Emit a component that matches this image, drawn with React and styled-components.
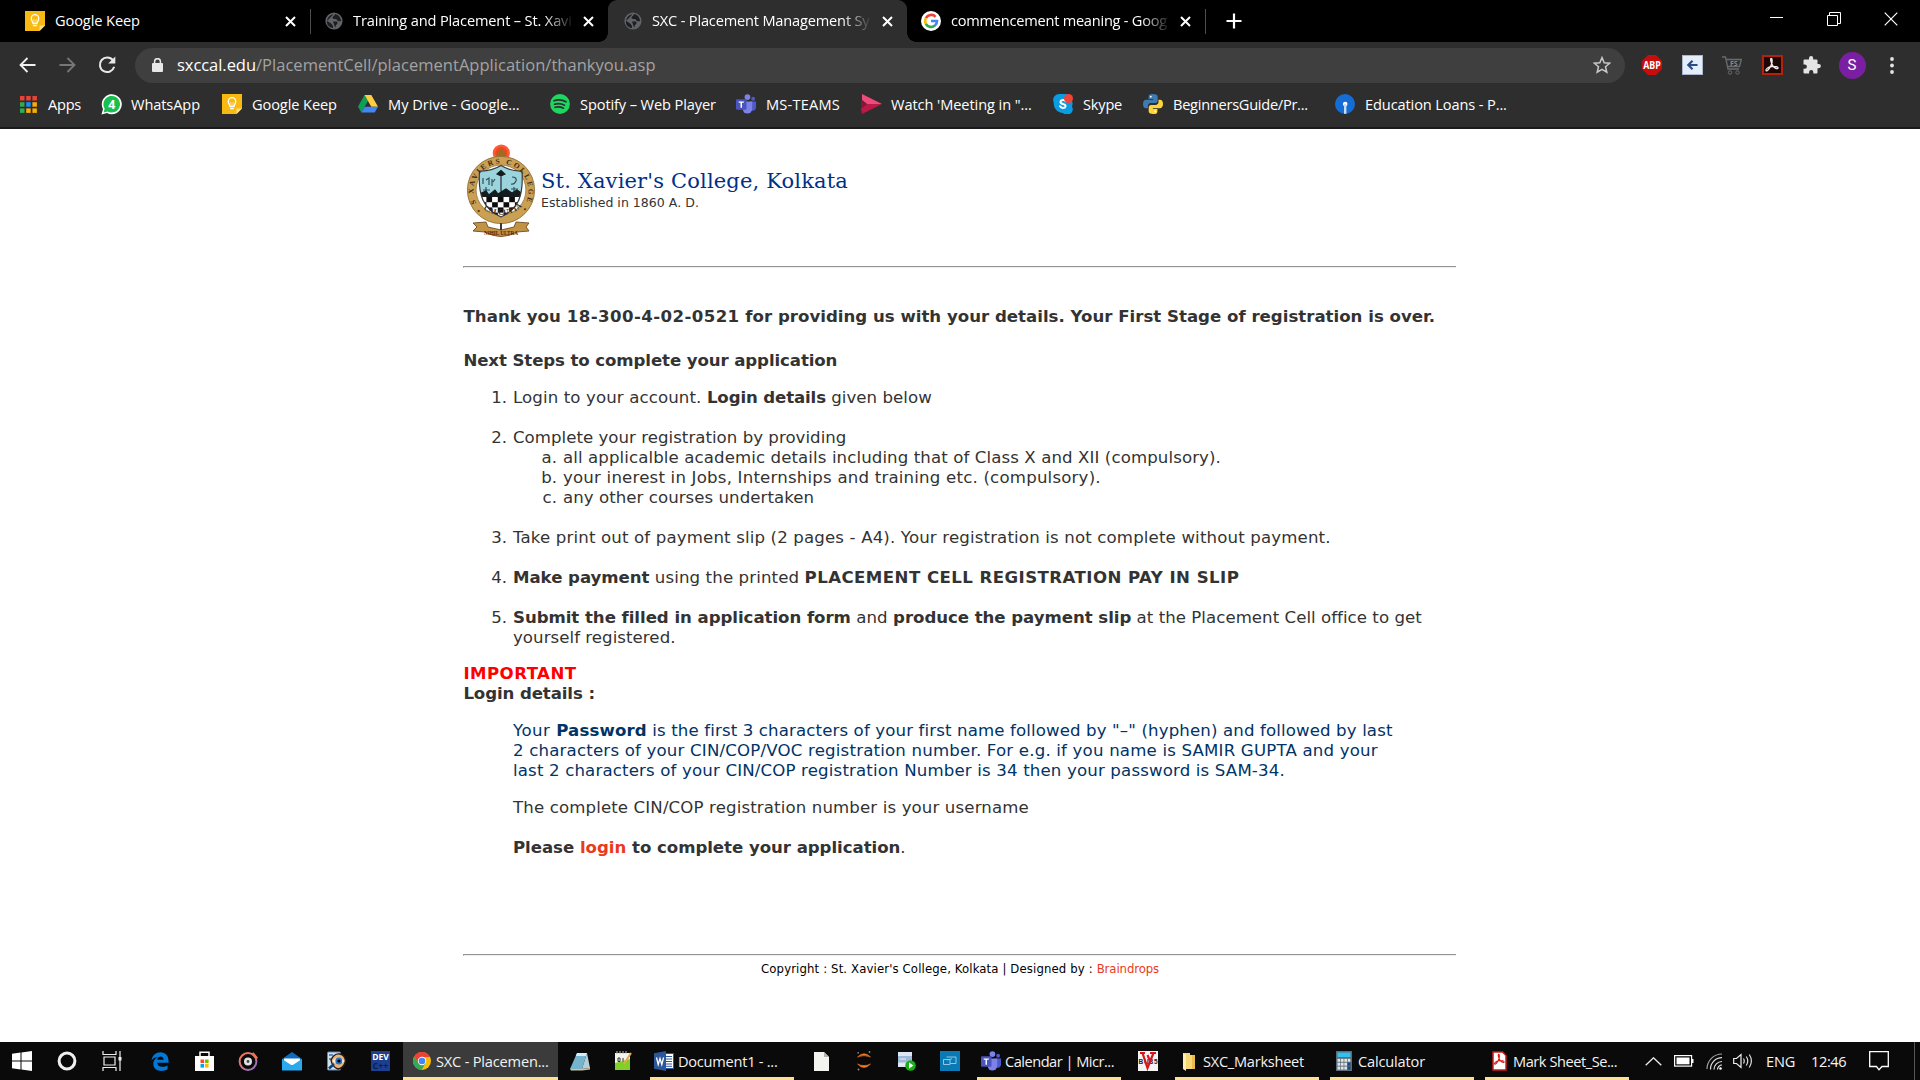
import React from "react";
import styled, { createGlobalStyle, css } from "styled-components";

const ui = `"Open Sans", "Noto Sans", sans-serif`;
const body = `"DejaVu Sans", Verdana, sans-serif`;

const GlobalStyle = createGlobalStyle`
  * { box-sizing: border-box; }
  html, body { margin: 0; background: #fff; overflow: hidden; }
`;

const Screen = styled.div`
  width: 1920px;
  height: 1080px;
  display: flex;
  flex-direction: column;
  background: #fff;
  overflow: hidden;
`;

/* ---------- browser tabs ---------- */

const TabStrip = styled.div`
  height: 42px;
  flex: none;
  display: flex;
  background: #000;
`;

const Tab = styled.div`
  width: ${(p) => p.$w}px;
  height: 42px;
  padding-left: ${(p) => p.$pad}px;
  padding-right: 13px;
  display: flex;
  align-items: center;
  flex: none;
  position: relative;
  ${(p) =>
    p.$active &&
    css`
      background: #2e2e2e;
      border-radius: 9px 9px 0 0;
      &::before,
      &::after {
        content: "";
        position: absolute;
        bottom: 0;
        width: 9px;
        height: 9px;
      }
      &::before {
        left: -9px;
        background: radial-gradient(circle at 0 0, transparent 8.5px, #2e2e2e 9px);
      }
      &::after {
        right: -9px;
        background: radial-gradient(circle at 100% 0, transparent 8.5px, #2e2e2e 9px);
      }
    `}
`;

const TabTitle = styled.span`
  width: ${(p) => p.$w}px;
  margin-left: 10px;
  padding-bottom: 2px;
  font: 14.6px/20px ${ui};
  letter-spacing: ${(p) => p.$ls}px;
  color: #fff;
  white-space: nowrap;
  flex: none;
  ${(p) => p.$fade && css`mask-image: linear-gradient(to right, #000 calc(100% - 30px), transparent 100%);`}
`;

const TabClose = styled.span`
  margin-left: auto;
  width: 14px;
  height: 20px;
  display: flex;
  align-items: center;
  justify-content: center;
`;

const Divider = styled.i`
  width: 1px;
  height: 25px;
  margin-top: 9px;
  background: #4d4d4d;
  flex: none;
`;

const NewTab = styled.span`
  width: 56px;
  display: flex;
  align-items: center;
  justify-content: center;
`;

const WindowControls = styled.div`
  margin-left: auto;
  margin-right: 1px;
  height: 37px;
  display: flex;
  align-items: center;
`;

const WindowButton = styled.span`
  width: 57px;
  display: flex;
  justify-content: center;
`;

/* ---------- toolbar ---------- */

const Toolbar = styled.div`
  height: 44px;
  flex: none;
  display: flex;
  align-items: center;
  padding: 2px 0 0 17px;
  background: #2e2e2e;
`;

const NavButton = styled.span`
  width: 20px;
  margin-right: ${(p) => p.$mr || 20}px;
  display: flex;
  justify-content: center;
`;

const AddressBar = styled.div`
  width: 1490px;
  height: 35px;
  margin-left: -3px;
  border-radius: 18px;
  background: #3f3f3f;
  display: flex;
  align-items: center;
  padding: 0 14px 0 17px;
`;

const Url = styled.span`
  margin-left: 14px;
  font: 16.5px/24px ${ui};
  letter-spacing: -0.05px;
  color: #fff;
  flex: 1;
`;

const UrlPath = styled.span`
  color: #a3a3a3;
  letter-spacing: 0.03px;
`;

const Extensions = styled.div`
  display: flex;
  align-items: center;
  margin-left: 7px;
`;

const Extension = styled.span`
  width: 40px;
  display: flex;
  justify-content: center;
`;

const Avatar = styled.span`
  width: 27px;
  height: 27px;
  border-radius: 50%;
  background: #7b1fa2;
  color: #fff;
  font: 15px/27px Roboto, sans-serif;
  text-align: center;
`;

const Bookmarks = styled.div`
  height: 43px;
  flex: none;
  display: flex;
  align-items: center;
  padding: 0 0 5px 18px;
  background: #2e2e2e;
  border-bottom: 2px solid #1c1a1b;
`;

const Bookmark = styled.div`
  width: ${(p) => p.$w}px;
  display: flex;
  align-items: center;
  flex: none;
  font: 14.6px/20px ${ui};
  letter-spacing: ${(p) => p.$ls}px;
  color: #fff;
  white-space: nowrap;
  gap: 9px;
`;

const IconBox = styled.span`
  width: ${(p) => p.$w || 22}px;
  height: 22px;
  display: flex;
  align-items: center;
  justify-content: center;
  flex: none;
`;

/* ---------- page ---------- */

const Page = styled.main`
  flex: 1;
  background: #fff;
  padding-left: 463px;
  font: 16.6px/20px ${body};
  color: #333;
`;

const Column = styled.div`
  width: 993px;
`;

const Masthead = styled.header`
  height: 137px;
  padding: 14px 0 0 1px;
  display: flex;
`;

const SchoolText = styled.div`
  padding: 24px 0 0 3px;
`;

const SchoolName = styled.div`
  font: 21px/28px "DejaVu Serif", serif;
  letter-spacing: 0.16px;
  color: #003087;
  white-space: nowrap;
`;

const Established = styled.div`
  font: 12.5px/16px ${body};
  letter-spacing: 0.04px;
  color: #333;
`;

const Rule = styled.div`
  height: 2px;
  border-top: 1px solid #949494;
  border-left: 1px solid #949494;
  border-bottom: 1px solid #eee;
`;

const Para = styled.div`
  margin-top: ${(p) => p.$mt || 0}px;
  padding-left: ${(p) => p.$indent || 0.4}px;
  color: ${(p) => p.$color || "inherit"};
  white-space: nowrap;
`;

const Steps = styled.ol`
  list-style: none;
  margin: 17px 0 0;
  padding: 0;
  display: flex;
  flex-direction: column;
  gap: 20px;
`;

const SubSteps = styled.ol`
  list-style: none;
  margin: 0;
  padding: 0;
`;

const Step = styled.li`
  display: flex;
  white-space: nowrap;
`;

const Marker = styled.span`
  width: 50px;
  padding-right: 6px;
  text-align: right;
  flex: none;
`;

const Run = styled.span`
  letter-spacing: ${(p) => p.$ls || 0}px;
`;

const Bold = styled.b`
  font-weight: bold;
  letter-spacing: ${(p) => p.$ls || 0}px;
  color: ${(p) => p.$color || "inherit"};
`;

const Spacer = styled.div`
  height: ${(p) => p.$h}px;
`;

const Footer = styled.footer`
  padding: 5px 0 0 298px;
  font: 13px/16px "DejaVu Sans Condensed", "DejaVu Sans", Tahoma, sans-serif;
  font-stretch: condensed;
  letter-spacing: 0.13px;
  color: #000;
  white-space: nowrap;
`;

const FooterLink = styled.a`
  color: #ea3a20;
  letter-spacing: -0.08px;
`;

/* ---------- taskbar ---------- */

const Taskbar = styled.div`
  height: 38px;
  flex: none;
  display: flex;
  background: #0a0a0a;
`;

const TaskIcon = styled.span`
  width: ${(p) => p.$w}px;
  display: flex;
  align-items: center;
  justify-content: center;
  flex: none;
`;

const TaskWindow = styled.div`
  width: ${(p) => p.$w || 144}px;
  margin-left: ${(p) => p.$ml || 0}px;
  padding-left: ${(p) => (p.$active ? 9 : 4)}px;
  border-bottom: 3px solid #ffe092;
  background: ${(p) => (p.$active ? "#3b3b3b" : "transparent")};
  display: flex;
  align-items: center;
  gap: 4px;
  flex: none;
  padding-top: 3px;
  font: 14.6px/20px ${ui};
  letter-spacing: ${(p) => p.$ls}px;
  color: #f2f2f2;
  white-space: nowrap;
`;

const Tray = styled.div`
  margin-left: 16px;
  display: flex;
  align-items: center;
  font: 14.6px/20px ${ui};
  color: #f5f5f5;
`;

const TrayItem = styled.span`
  width: ${(p) => p.$w}px;
  margin-right: ${(p) => p.$mr || 0}px;
  letter-spacing: ${(p) => p.$ls || 0}px;
  display: flex;
  flex: none;
  white-space: nowrap;
`;

const ShowDesktop = styled.span`
  margin-left: auto;
  width: 6px;
  border-left: 1px solid #555;
`;

/* ---------- icons ---------- */

const Svg = ({ w = 20, h, vb, children, ...rest }) => (
  <svg width={w} height={h || w} viewBox={vb || `0 0 ${w} ${h || w}`} fill="none" {...rest}>
    {children}
  </svg>
);

const KeepIcon = () => (
  <Svg>
    <path d="M0 0H20V14.500L14.500 20H0Z" fill="#f9b913" />
    <path d="M14.500 20V14.500H20Z" fill="#fde07a" />
    <path d="M8 12.500C8 10.800 6.300 10 6.300 7.400a3.700 3.700 0 0 1 7.400 0C13.700 10 12 10.800 12 12.500ZM8.200 14.700H11.800" stroke="#fff" strokeWidth="1.300" />
    <path d="M9 12V9L8.500 8M11 12V9L11.500 8" stroke="#fff" strokeWidth=".6" />
  </Svg>
);

const GlobeIcon = () => (
  <Svg w={18}>
    <circle cx="9" cy="9" r="8.600" fill="#5f6368" />
    <path d="M8.500 2.200C5 2.800 2.300 5.400 2.200 9l3.600 2.200c1.500.8 1 1.900 2.200 2.300v2.600C4 15.600 1.500 12.500 2 9M10 2c0 1.800-2 2-2.400 3.300-.4 1.400 1.200 1.900 3 1.800 1.600 0 1.400 2 3 2.100 1.300.1 2.500-.3 2.500-.3C15.700 5.300 13.500 2.700 10 2ZM8 9.500h4c1 1.500.5 2.500-1 3.500l-.8 2.800" fill="#1d1e20" />
  </Svg>
);

const CloseIcon = () => (
  <Svg w={11}>
    <path d="M1 1L10 10M10 1L1 10" stroke="#fff" strokeWidth="2" />
  </Svg>
);

const GoogleIcon = () => (
  <Svg>
    <circle cx="10" cy="10" r="10" fill="#fff" />
    <path d="M14.600 5.800A6 6 0 0 0 4.900 7.200" stroke="#ea4335" strokeWidth="2.600" />
    <path d="M4.900 7.100a6 6 0 0 0 0 5.800" stroke="#fbbc05" strokeWidth="2.600" />
    <path d="M4.800 12.800a6 6 0 0 0 9.200 1.700" stroke="#34a853" strokeWidth="2.600" />
    <path d="M10 10H16A6 6 0 0 1 13.900 14.600" stroke="#4285f4" strokeWidth="2.600" />
  </Svg>
);

const AppsIcon = () => (
  <Svg w={17}>
    {["#ea4335", "#ea4335", "#ea4335", "#34a853", "#1a8cff", "#fbab05", "#34a853", "#fbab05", "#fbab05"].map((c, i) => (
      <rect key={i} x={(i % 3) * 6.2} y={Math.floor(i / 3) * 6.2} width="4.500" height="4.500" fill={c} />
    ))}
  </Svg>
);

const WhatsAppIcon = () => (
  <Svg w={21}>
    <path d="M.5 20.500L2 15A10 10 0 1 1 6 19Z" fill="#fff" />
    <path d="M2.500 18.500L3.700 14.700A8.300 8.300 0 1 1 6.500 17.400Z" fill="#16bf4e" />
    <text x="10.800" y="15" textAnchor="middle" fontFamily="Roboto" fontWeight="bold" fontSize="13" fill="#fff">4</text>
  </Svg>
);

const DriveIcon = () => (
  <Svg w={20} h={18}>
    <path d="M6.500 0L0 11.500L3.300 17.500L10 6Z" fill="#0f9d58" />
    <path d="M6.500 0H13.300L20 11.700H13.300Z" fill="#ffcd40" />
    <path d="M6.700 11.700H20L16.700 17.500H3.300Z" fill="#4285f4" />
  </Svg>
);

const SpotifyIcon = () => (
  <Svg>
    <circle cx="10" cy="10" r="9.900" fill="#1ed760" />
    <path d="M4 6.800c4-1.300 8.500-.9 12 1M4.500 10.200c3.500-1 7-.6 10 1M5 13.300c3-.8 6-.5 8.500.9" stroke="#2e2e2e" strokeWidth="1.700" strokeLinecap="round" />
  </Svg>
);

const TeamsIcon = () => (
  <Svg w={20} h={22} vb="0 0 21 21">
    <circle cx="18" cy="5" r="2" fill="#5059c9" />
    <circle cx="12" cy="3.200" r="3" fill="#7b83eb" />
    <path d="M15 8h6v6a3.500 3.500 0 0 1-5 3.300Z" fill="#5059c9" />
    <path d="M7 8h10v7.500a5 5 0 0 1-10 0Z" fill="#7b83eb" />
    <rect x="0" y="5.500" width="11" height="11" rx="1" fill="#4b53bc" />
    <path d="M2.800 8.500H8.200M5.500 8.500V14.500" stroke="#fff" strokeWidth="1.500" />
  </Svg>
);

const StreamIcon = () => (
  <Svg w={21} h={20}>
    <path d="M1 0L21 10H6L1 6Z" fill="#ef4a7b" />
    <path d="M0 6.500L6 10L0 14Z" fill="#8a1538" />
    <path d="M0 14.500L6 10H21L1 20Z" fill="#bc1948" />
  </Svg>
);

const SkypeIcon = () => (
  <Svg w={21} h={20}>
    <path d="M6 0a6 6 0 0 0-5.300 8.500A9.500 9.500 0 0 0 10 19a5.600 5.600 0 0 0 9-6.500A10 10 0 0 0 6 0Z" fill="#0a9be3" />
    <path d="M12.800 7.200C12 6 10.600 5.900 9.500 6 7.500 6.200 6.500 8.800 9 9.700c1.700.6 4 .7 3.500 2.800-.6 2-4.500 2-5.500-.3" stroke="#fff" strokeWidth="2" strokeLinecap="round" />
    <circle cx="15.500" cy="4.500" r="4.500" fill="#f04438" />
  </Svg>
);

const PythonIcon = () => (
  <Svg w={20}>
    <path d="M9.800 0C6.500 0 5.600 1 5.600 2.600V5h4.600v.8H3.200C1.200 5.800 0 7.300 0 10s1 4.300 3 4.300h1.900v-2.400c0-1.600 1.300-2.900 3-2.900h4.400c1.400 0 2.400-1 2.400-2.400v-4C14.700 1 13 0 9.800 0Z" fill="#3d7bb0" />
    <path d="M10.200 20c3.300 0 4.200-1 4.200-2.600V15H9.800v-.8h7c2 0 3.200-1.500 3.200-4.200s-1-4.300-3-4.300h-1.500v2.300c0 1.600-1.300 2.900-3 2.900H8.100c-1.400 0-2.400 1-2.400 2.400v4C5.700 19 7 20 10.200 20Z" fill="#ffd43b" />
    <circle cx="7.800" cy="2.700" r=".9" fill="#fff" />
    <circle cx="12.300" cy="17.300" r=".9" fill="#fff" />
  </Svg>
);

const LoanIcon = () => (
  <Svg>
    <circle cx="10" cy="10" r="10" fill="#156cd4" />
    <circle cx="10.200" cy="10" r="2.300" fill="#fff" />
    <path d="M10.200 10V19.800" stroke="#c6dcf7" strokeWidth="2.400" />
  </Svg>
);

const BackIcon = ({ color = "#f0f0f0", flip }) => (
  <Svg w={17} h={16} transform={flip ? "scale(-1,1)" : undefined}>
    <path d="M16.500 8H1.500M8.500 1L1.500 8L8.500 15" stroke={color} strokeWidth="1.800" />
  </Svg>
);

const ReloadIcon = () => (
  <Svg w={18}>
    <path d="M15 4.300A7.300 7.300 0 1 0 16.200 10.800" stroke="#e8e8e8" strokeWidth="2" />
    <path d="M17.300 0.500V7.600H10.200Z" fill="#e8e8e8" />
  </Svg>
);

const LockIcon = () => (
  <Svg w={11} h={14}>
    <rect x="0" y="5" width="11" height="9" rx="1" fill="#e8e8e8" />
    <path d="M2.600 6V3.600a2.900 2.900 0 0 1 5.800 0V6" stroke="#e8e8e8" strokeWidth="1.500" />
  </Svg>
);

const StarIcon = () => (
  <Svg w={18}>
    <path d="M9 1.600L11.200 6.700L16.700 7.200L12.500 10.800L13.800 16.200L9 13.300L4.200 16.200L5.500 10.800L1.300 7.200L6.800 6.700Z" stroke="#c9c9c9" strokeWidth="1.500" />
  </Svg>
);

const AbpIcon = () => (
  <Svg w={20}>
    <path d="M6 0H14L20 6V14L14 20H6L0 14V6Z" fill="#c70d0d" />
    <text x="10" y="13.800" textLength="17.500" lengthAdjust="spacingAndGlyphs" textAnchor="middle" fontFamily="Open Sans" fontWeight="bold" fontSize="10.500" fill="#fff">ABP</text>
  </Svg>
);

const TranslatorIcon = () => (
  <Svg w={21} h={20}>
    <rect x=".5" y=".5" width="20" height="19" fill="#e4eefb" stroke="#a9b8cc" />
    <path d="M15.500 10H6.500M10.500 5.800L6.300 10L10.500 14.200" stroke="#2b4c86" strokeWidth="2.200" />
  </Svg>
);

const CartIcon = () => (
  <Svg w={20} h={19}>
    <path d="M0 1H3.500L6 13H17M4.200 3.500H19.300L17.500 10.500H5.800" stroke="#6b6b6b" strokeWidth="1.300" />
    <circle cx="8" cy="16.500" r="1.700" stroke="#6b6b6b" />
    <circle cx="15.500" cy="16.500" r="1.700" stroke="#6b6b6b" />
    <text x="11.800" y="9.700" textAnchor="middle" fontFamily="Open Sans" fontWeight="bold" fontSize="7" fill="#8a8a8a">FS</text>
  </Svg>
);

const Acrobat = ({ stroke }) => (
  <path d="M9.200 3.500C8 3.500 9 7.500 10.500 10.200C12 12.800 14.800 14.500 16 13.200C16.700 11.800 12.500 11 9.500 11.500C6 12.200 3.500 14 4 15.500C5.200 17 8.500 12.500 9.600 9C10.400 6.500 10.400 3.500 9.200 3.500Z" stroke={stroke} strokeWidth="1.300" />
);

const PdfExtIcon = () => (
  <Svg w={21} h={20}>
    <rect x="1" y="1" width="19" height="18" fill="#1c0504" stroke="#b3220f" strokeWidth="2" />
    <Acrobat stroke="#f2e9e8" />
  </Svg>
);

const PuzzleIcon = () => (
  <Svg w={18}>
    <path d="M6 3.500V2.200a2.100 2.100 0 0 1 4.200 0V3.500H13.500a1 1 0 0 1 1 1V8H15.800a2.100 2.100 0 0 1 0 4.200H14.500V16.500a1 1 0 0 1-1 1H10.300V16a2.100 2.100 0 0 0-4.200 0V17.500H1.500a1 1 0 0 1-1-1V12.800H1.800a2.100 2.100 0 0 0 0-4.200H.5V4.500a1 1 0 0 1 1-1Z" fill="#e4e4e4" />
  </Svg>
);

const DotsIcon = () => (
  <Svg w={4} h={17}>
    {[2, 8.5, 15].map((y) => <circle key={y} cx="2" cy={y} r="1.900" fill="#e4e4e4" />)}
  </Svg>
);

const shieldPath = "M15.500 28Q27 28.500 37 22.500Q47 28.500 58 28C59.500 52 55 66 37 74C19 66 14 52 15.500 28Z";

const Crest = () => (
  <Svg w={74} h={98}>
    <defs>
      <path id="ringTop" d="M17.200 67.200A27.500 27.500 0 1 1 56.800 67.200" />
      <path id="ringBottom" d="M9.500 55A31 31 0 0 0 64.500 55" />
      <clipPath id="shield">
        <path d={shieldPath} />
      </clipPath>
    </defs>
    <circle cx="37.300" cy="10" r="8.600" fill="#ff5a36" />
    <circle cx="37.300" cy="10" r="6" fill="#f2461f" />
    <path d="M37.300 4.500L40 9L42.500 10.500L39.500 15H35L32 10.500L34.500 9Z" fill="#a06a24" />
    <path d="M37 70V91" stroke="#222" strokeWidth="1.400" />
    <circle cx="37" cy="47" r="29.300" stroke="#caa055" strokeWidth="8.800" />
    <circle cx="37" cy="47" r="33.600" stroke="#8d6a34" strokeWidth=".8" />
    <circle cx="37" cy="47" r="24.900" stroke="#8d6a34" strokeWidth=".7" />
    <g clipPath="url(#shield)">
      <rect x="12" y="20" width="50" height="56" fill="#9cd4de" />
      <path d="M19 35V41M22 37L25 35V42M28 36V43M31 36L29 39M48 34Q53 34 52 38Q50 42 47 41M19 47H26M47 46H54M22 44V49M50 44V49" stroke="#2f5058" strokeWidth="1.200" />
      <path d="M37 32V52M33 31L37 27.500L41 31L37 33ZM15 51L22 48L25 52L31 47L34 51L42 46L48 50L53 47L60 52V56H14Z" fill="#151c1e" stroke="#151c1e" strokeWidth="1.100" />
      <rect x="12" y="54" width="50" height="22" fill="#fff" />
      {[0, 1, 2, 3].map((r) =>
        [0, 1, 2, 3, 4, 5, 6, 7, 8].map((c) =>
          (r + c) % 2 ? null : <rect key={`${r}-${c}`} x={11 + c * 5.7} y={54 + r * 5.2} width="5.700" height="5.200" fill="#0d0d0d" />
        )
      )}
    </g>
    <path d={shieldPath} stroke="#3a3a3a" strokeWidth="1.200" />
    <text fontFamily="Liberation Serif" fontWeight="bold" fontSize="7.400" fill="#3b2710">
      <textPath href="#ringTop" textLength="126">• S XAVIERS COLLEGE •</textPath>
    </text>
    <text fontFamily="Liberation Serif" fontWeight="bold" fontSize="7.400" fill="#3b2710">
      <textPath href="#ringBottom" startOffset="15" textLength="42">CALCUTTA</textPath>
    </text>
    <path d="M9 80L22 79L24 84L37 87L50 84L52 79L65 80L62 84L65 88L53 89Q37 98 21 89L9 88L13 84Z" fill="#c39345" stroke="#6d4c1d" strokeWidth=".9" />
    <path d="M37 80V87" stroke="#222" strokeWidth="1.300" />
    <text x="37" y="92" textAnchor="middle" fontFamily="Liberation Serif" fontWeight="bold" fontSize="5.200" fill="#3b2710">NIHIL ULTRA</text>
  </Svg>
);

const StartIcon = () => (
  <Svg w={20}>
    <path d="M0 2.800L8.500 1.600V9.500H0ZM9.500 1.400L20 0V9.500H9.500ZM0 10.500H8.500V18.400L0 17.200ZM9.500 10.500H20V20L9.500 18.600Z" fill="#fff" />
  </Svg>
);
const CortanaIcon = () => <Svg w={20}><circle cx="10" cy="10" r="7.900" stroke="#f0f0f0" strokeWidth="3" /></Svg>;
const TaskViewIcon = () => (
  <Svg w={20}>
    <path d="M1 0V3.500H14V0M1 20V16.500H14V20M2 6H13V14H2ZM18 0V20" stroke="#eee" strokeWidth="1.200" />
    <rect x="16.500" y="6" width="3" height="3.500" fill="#eee" />
  </Svg>
);
const EdgeIcon = () => (
  <Svg w={18} h={19}>
    <path d="M.5 8.500C1.500 3 5 .3 9.500.3c5.500 0 8.500 4 8 10.500H6.200c.3 4.500 6.500 5 10.300 2.700v4C10.500 20.500 2.300 18.800 2.300 12c0-3.500 2-5.700 4.500-7C3.800 5.300 1.700 6.500.5 8.500ZM6.200 7.700h6.400c0-4.500-6-4.200-6.400 0Z" fill="#0078d7" />
  </Svg>
);
const StoreIcon = () => (
  <Svg w={19} h={20}>
    <path d="M5 5V1.200H14V5" stroke="#fff" strokeWidth="1.500" />
    <path d="M0 5H19V20H0Z" fill="#fff" />
    <rect x="5.500" y="8.500" width="3.600" height="3.600" fill="#f25022" />
    <rect x="10" y="8.500" width="3.600" height="3.600" fill="#7fba00" />
    <rect x="5.500" y="13" width="3.600" height="3.600" fill="#00a4ef" />
    <rect x="10" y="13" width="3.600" height="3.600" fill="#ffb900" />
  </Svg>
);
const GrooveIcon = () => (
  <Svg w={20}>
    <defs><linearGradient id="gr" x1="0" y1="0" x2="1" y2="1"><stop stopColor="#ff7a4a" /><stop offset="1" stopColor="#8a6fd0" /></linearGradient></defs>
    <circle cx="10" cy="10.500" r="8.400" stroke="url(#gr)" strokeWidth="2" />
    <circle cx="10" cy="10.500" r="4" fill="#e2e2e2" /><circle cx="10" cy="10.500" r="1.400" fill="#444" />
    <path d="M14.500 2L19 7.500" stroke="#f0754f" strokeWidth="2.600" />
  </Svg>
);
const MailIcon = () => (
  <Svg w={20} h={19}>
    <path d="M0 7L10 0L20 7V18H0Z" fill="#0f6cbd" /><path d="M2 6.500H18V13H2Z" fill="#fff" />
    <path d="M0 7L10 13.500L20 7V18.500H0Z" fill="#2aa9ee" />
  </Svg>
);
const EyeIcon = () => (
  <Svg w={19} h={20}>
    <rect x=".5" y="1" width="13" height="18" rx="1" fill="#cfe0f0" stroke="#5c87b5" />
    <path d="M2 4H6M2 8H4" stroke="#3b6ea5" strokeWidth="1.500" />
    <path d="M4 9Q7 2 13 3Q18 4 18.500 10Q17 17 11 18Q5 16 4 9Z" fill="#e9b579" stroke="#2a1a10" strokeWidth="1.400" />
    <path d="M5.500 10Q11 3.500 17.500 10Q11.500 16.500 5.500 10Z" fill="#f7f7f7" />
    <circle cx="11.800" cy="10" r="3.500" fill="#2a6fc4" /><circle cx="12" cy="10" r="1.600" fill="#000" />
    <path d="M2 17.500L7 13" stroke="#123e7a" strokeWidth="2.500" />
  </Svg>
);
const DevIcon = () => (
  <Svg w={19} h={20}>
    <rect width="19" height="20" fill="#1c3f8f" />
    <text x="9.500" y="8.800" textAnchor="middle" fontFamily="Open Sans" fontWeight="bold" fontSize="8.500" fill="#fff">DEV</text>
    <text x="9.500" y="18" textAnchor="middle" fontFamily="Open Sans" fontWeight="bold" fontSize="9" fill="#0c1f52">C++</text>
  </Svg>
);
const ChromeIcon = () => (
  <Svg w={18}>
    <circle cx="9" cy="9" r="9" fill="#fbbc05" />
    <path d="M9 9L12.600 11.100L8.600 18A9 9 0 0 1 1.200 4.500L5.400 11Z" fill="#34a853" />
    <path d="M1.200 4.500A9 9 0 0 1 17 5H9V9L5.400 11.100Z" fill="#ea4335" />
    <circle cx="9" cy="9" r="4.200" fill="#fff" /><circle cx="9" cy="9" r="3.300" fill="#4285f4" />
  </Svg>
);
const NotepadIcon = () => (
  <Svg w={20} h={19}>
    <path d="M7 1H17L12 17H0Z" fill="#74b4cc" /><path d="M7 1H17L16 4H5.800Z" fill="#d5edf5" />
    <path d="M17 1L20 16L12 17Z" fill="#b5cdd6" /><path d="M0 17H12L20 16V17.500L12 18.500H1Z" fill="#d0c49a" />
  </Svg>
);
const NppIcon = () => (
  <Svg w={18} h={20}>
    <path d="M1 2H16V19H1Z" fill="#f4f6ea" /><path d="M1 12L16 8V19H1Z" fill="#83cf29" />
    <path d="M3 0V3M6 0V3M9 0V3M12 0V3" stroke="#bbb" /><path d="M4 7V10.500H6V7H4M9 7V10.500" stroke="#333" strokeWidth="1" />
    <path d="M17 2L10 13" stroke="#e3a94b" strokeWidth="2" />
  </Svg>
);
const WordIcon = () => (
  <Svg w={20}>
    <rect x="9" y="2.500" width="10.500" height="15" fill="#fff" stroke="#2b579a" />
    <path d="M12 5.500H18M12 8H18M12 10.500H18M12 13H18M12 15.300H18" stroke="#2b579a" />
    <path d="M0 2.200L12 0V20L0 17.800Z" fill="#2b579a" />
    <path d="M2.500 6.500L4.200 13.500L6 7.500L7.800 13.500L9.600 6.500" stroke="#fff" strokeWidth="1.300" />
  </Svg>
);
const FileIcon = () => (
  <Svg w={15} h={19}><path d="M0 0H10L15 5V19H0Z" fill="#f3f3ef" /><path d="M10 0V5H15Z" fill="#b5b5b0" /></Svg>
);
const JupyterIcon = () => (
  <Svg w={14} h={20}>
    <path d="M.5 6Q7-.5 13.500 6Q7 3.200 .5 6ZM.5 13Q7 20 13.500 13Q7 16.200 .5 13Z" fill="#f37726" stroke="#f37726" strokeWidth=".6" />
    <circle cx="1.200" cy="1.800" r=".9" fill="#888" /><circle cx="12.500" cy="1" r=".9" fill="#888" /><circle cx="1.500" cy="18.500" r="1" fill="#888" />
  </Svg>
);
const ServerIcon = () => (
  <Svg w={18} h={19}>
    <path d="M0 0H14V15H0Z" fill="#9fb9da" /><path d="M0 0H14V4H0ZM0 10.500H14V15H0Z" fill="#dde7f3" />
    <path d="M1.500 7H8M1.500 12.500H8" stroke="#eee" />
    <circle cx="12.500" cy="13.500" r="5.300" fill="#1cae1c" /><path d="M11 10.500L15.500 13.500L11 16.500Z" fill="#fff" />
  </Svg>
);
const RemoteIcon = () => (
  <Svg w={20}>
    <rect width="20" height="20" fill="#0a7ab5" />
    <path d="M6.500 6H16V12.500H10M3.500 8.500H10V13.500H3.500ZM7 9L12 7.800" stroke="#8fc6e2" />
  </Svg>
);
const VbIcon = () => (
  <Svg w={20}>
    <rect width="20" height="20" fill="#f4f4f4" />
    <text x="10" y="12.500" textAnchor="middle" textLength="19" fontFamily="Liberation Sans" fontWeight="bold" fontSize="6.500" fill="#222">BU85</text>
    <path d="M2 2H7M12 2H18M4.500 2L9.500 17L15.500 2M9.500 4L12 10" stroke="#d8141c" strokeWidth="2.200" />
  </Svg>
);
const FolderIcon = () => (
  <Svg w={12} h={19}><path d="M0 1H7V3H12V17H0Z" fill="#f8d775" /><path d="M0 1L3 3V19L0 17Z" fill="#ffeeb0" /><path d="M9 3H12V17H9Z" fill="#e8bd4c" /></Svg>
);
const CalcIcon = () => (
  <Svg w={16} h={20}>
    <rect width="16" height="20" fill="#5f6b75" /><rect x="1.500" y="1.500" width="13" height="4.500" fill="#31c0f2" />
    {[0, 1, 2, 3].map((c) => [0, 1, 2].map((r) => <rect key={`${c}${r}`} x={1.5 + c * 3.4} y={7.8 + r * 3.9} width="2.700" height="3" fill={c === 3 && r ? "#0d4f94" : "#dfe4e8"} />))}
  </Svg>
);
const PdfFileIcon = () => (
  <Svg w={15} h={20}>
    <path d="M1 1H10.500L14 4.500V19H1Z" fill="#fff" stroke="#c81e1e" strokeWidth="1.500" />
    <g transform="translate(-.7 .5) scale(.8)"><Acrobat stroke="#d11" /></g>
  </Svg>
);

const ChevronIcon = () => <Svg w={17} h={9}><path d="M.7 8.300L8.500 .8L16.300 8.300" stroke="#eee" strokeWidth="1.300" /></Svg>;
const BatteryIcon = () => (
  <Svg w={20} h={12}><rect x=".6" y=".6" width="17" height="10.500" stroke="#fff" strokeWidth="1.200" /><rect x="2.500" y="2.500" width="13" height="6.800" fill="#fff" /><rect x="18" y="4" width="1.500" height="4" fill="#fff" /></Svg>
);
const WifiIcon = () => (
  <Svg w={17} h={17}>
    <path d="M1 16A15 15 0 0 1 16 1" stroke="#a0a0a0" strokeWidth="1.200" />
    <path d="M4.500 16.500A11.500 11.500 0 0 1 16 4.700M8 16.500A8 8 0 0 1 16 8.500M11.500 16.500A4.500 4.500 0 0 1 16 12" stroke="#e4e4e4" strokeWidth="1.200" />
    <circle cx="14.500" cy="15.500" r="1.300" fill="#fff" />
  </Svg>
);
const SpeakerIcon = () => (
  <Svg w={21} h={18}>
    <path d="M.7 6.500H3.500L8 2.500V15.500L3.500 11.500H.7Z" stroke="#eee" strokeWidth="1.200" />
    <path d="M10.500 6.500Q12 9 10.500 11.500M13.300 4.500Q16.200 9 13.300 13.500M16.300 2.500Q20.500 9 16.300 15.500" stroke="#ddd" strokeWidth="1.200" />
  </Svg>
);
const ActionIcon = () => <Svg w={20}><path d="M.7 .7H19.300V15.500H13L10 18.800L7.500 15.500H.7Z" stroke="#fff" strokeWidth="1.300" /></Svg>;

/* ---------- data ---------- */

const bookmarks = [
  { icon: <AppsIcon />, label: "Apps", w: 82, ls: -0.25, iw: 21 },
  { icon: <WhatsAppIcon />, label: "WhatsApp", w: 121, ls: -0.1 },
  { icon: <KeepIcon />, label: "Google Keep", w: 136, ls: -0.1 },
  { icon: <DriveIcon />, label: "My Drive - Google...", w: 192, ls: 0 },
  { icon: <SpotifyIcon />, label: "Spotify – Web Player", w: 186, ls: -0.11 },
  { icon: <TeamsIcon />, label: "MS-TEAMS", w: 125, ls: 0.2 },
  { icon: <StreamIcon />, label: "Watch 'Meeting in \"...", w: 192, ls: -0.08 },
  { icon: <SkypeIcon />, label: "Skype", w: 90, ls: -0.2 },
  { icon: <PythonIcon />, label: "BeginnersGuide/Pr...", w: 192, ls: -0.27 },
  { icon: <LoanIcon />, label: "Education Loans - P...", w: 180, ls: -0.12 },
];

export default function App() {
  return (
    <Screen>
      <GlobalStyle />
      <TabStrip>
        <Tab $w={310} $pad={25}>
          <KeepIcon />
          <TabTitle $w={220} $ls={-0.1}>Google Keep</TabTitle>
          <TabClose><CloseIcon /></TabClose>
        </Tab>
        <Divider />
        <Tab $w={297} $pad={14}>
          <GlobeIcon />
          <TabTitle $w={221} $ls={-0.15} $fade>Training and Placement – St. Xavi</TabTitle>
          <TabClose><CloseIcon /></TabClose>
        </Tab>
        <Tab $w={299} $pad={16} $active>
          <GlobeIcon />
          <TabTitle $w={220} $ls={-0.18} $fade>SXC - Placement Management Sy</TabTitle>
          <TabClose><CloseIcon /></TabClose>
        </Tab>
        <Tab $w={298} $pad={14}>
          <GoogleIcon />
          <TabTitle $w={220} $ls={-0.24} $fade>commencement meaning - Goog</TabTitle>
          <TabClose><CloseIcon /></TabClose>
        </Tab>
        <Divider />
        <NewTab>
          <Svg w={16}><path d="M8 .5V15.500M.5 8H15.500" stroke="#fff" strokeWidth="2.200" /></Svg>
        </NewTab>
        <WindowControls>
          <WindowButton><Svg w={13} h={13}><path d="M0 5.500H13" stroke="#fff" /></Svg></WindowButton>
          <WindowButton><Svg w={14} h={14}><path d="M.5 3.500H10.500V13.500H.5ZM2.500 3.500V.5H13.500V11.500H10.500" stroke="#fff" /></Svg></WindowButton>
          <WindowButton><Svg w={14} h={14}><path d="M.7 .7L13.300 13.300M13.300 .7L.7 13.300" stroke="#fff" strokeWidth="1.200" /></Svg></WindowButton>
        </WindowControls>
      </TabStrip>

      <Toolbar>
        <NavButton><BackIcon /></NavButton>
        <NavButton><BackIcon color="#777" flip /></NavButton>
        <NavButton $mr={21}><ReloadIcon /></NavButton>
        <AddressBar>
          <LockIcon />
          <Url>sxccal.edu<UrlPath>/PlacementCell/placementApplication/thankyou.asp</UrlPath></Url>
          <StarIcon />
        </AddressBar>
        <Extensions>
          <Extension><AbpIcon /></Extension>
          <Extension><TranslatorIcon /></Extension>
          <Extension><CartIcon /></Extension>
          <Extension><PdfExtIcon /></Extension>
          <Extension><PuzzleIcon /></Extension>
          <Extension><Avatar>S</Avatar></Extension>
          <Extension><DotsIcon /></Extension>
        </Extensions>
      </Toolbar>

      <Bookmarks>
        {bookmarks.map((b) => (
          <Bookmark key={b.label} $w={b.w} $ls={b.ls}>
            <IconBox $w={b.iw}>{b.icon}</IconBox>
            {b.label}
          </Bookmark>
        ))}
      </Bookmarks>

      <Page>
        <Column>
          <Masthead>
            <Crest />
            <SchoolText>
              <SchoolName>St. Xavier's College, Kolkata</SchoolName>
              <Established>Established in 1860 A. D.</Established>
            </SchoolText>
          </Masthead>
          <Rule />
          <Para $mt={39}>
            <Bold $ls={0.06}>Thank you </Bold>
            <Bold $ls={0.42}>18-300-4-02-0521</Bold>
            <Bold $ls={0}> for providing us with your details. Your First Stage of registration is over.</Bold>
          </Para>
          <Para $mt={24}><Bold $ls={-0.1}>Next Steps to complete your application</Bold></Para>
          <Steps>
            <Step>
              <Marker>1.</Marker>
              <div><Run $ls={0.117}>Login to your account. </Run><Bold $ls={-0.13}>Login details</Bold><Run $ls={0.05}> given below</Run></div>
            </Step>
            <Step>
              <Marker>2.</Marker>
              <div>
                <Run $ls={0.03}>Complete your registration by providing</Run>
                <SubSteps>
                  <Step><Marker>a.</Marker><Run $ls={0.1}>all applicalble academic details including that of Class X and XII (compulsory).</Run></Step>
                  <Step><Marker>b.</Marker><Run $ls={0.2}>your inerest in Jobs, Internships and training etc. (compulsory).</Run></Step>
                  <Step><Marker>c.</Marker><Run $ls={0.05}>any other courses undertaken</Run></Step>
                </SubSteps>
              </div>
            </Step>
            <Step>
              <Marker>3.</Marker>
              <Run $ls={0.15}>Take print out of payment slip (2 pages - A4). Your registration is not complete without payment.</Run>
            </Step>
            <Step>
              <Marker>4.</Marker>
              <div><Bold $ls={-0.05}>Make payment</Bold><Run $ls={0.12}> using the printed </Run><Bold $ls={0.44}>PLACEMENT CELL REGISTRATION PAY IN SLIP</Bold></div>
            </Step>
            <Step>
              <Marker>5.</Marker>
              <div>
                <Bold $ls={-0.05}>Submit the filled in application form</Bold><Run $ls={0.1}> and </Run><Bold $ls={-0.05}>produce the payment slip</Bold><Run $ls={0.04}> at the Placement Cell office to get</Run>
                <br />
                <Run $ls={0.05}>yourself registered.</Run>
              </div>
            </Step>
          </Steps>
          <Para $mt={16}><Bold $ls={0.45} $color="#f00">IMPORTANT</Bold></Para>
          <Para><Bold $ls={-0.1}>Login details :</Bold></Para>
          <Para $mt={17} $indent={50} $color="#036">
            <Run $ls={0.5}>Your </Run><Bold $ls={0.15}>Password</Bold><Run $ls={0.13}> is the first 3 characters of your first name followed by "–" (hyphen) and followed by last</Run>
            <br />
            <Run $ls={0.19}>2 characters of your CIN/COP/VOC registration number. For e.g. if you name is SAMIR GUPTA and your</Run>
            <br />
            <Run $ls={0.16}>last 2 characters of your CIN/COP registration Number is 34 then your password is SAM-34.</Run>
          </Para>
          <Para $mt={17} $indent={50}><Run $ls={0.13}>The complete CIN/COP registration number is your username</Run></Para>
          <Para $mt={20} $indent={50}><Bold $ls={-0.05}>Please <Bold as="a" $color="#ea3a1c">login</Bold> to complete your application</Bold>.</Para>
          <Spacer $h={96} />
          <Rule />
          <Footer>Copyright : St. Xavier's College, Kolkata | Designed by : <FooterLink>Braindrops</FooterLink></Footer>
        </Column>
      </Page>

      <Taskbar>
        <TaskIcon $w={44.5}><StartIcon /></TaskIcon>
        <TaskIcon $w={44.5}><CortanaIcon /></TaskIcon>
        <TaskIcon $w={46}><TaskViewIcon /></TaskIcon>
        <TaskIcon $w={50}><EdgeIcon /></TaskIcon>
        <TaskIcon $w={38}><StoreIcon /></TaskIcon>
        <TaskIcon $w={50}><GrooveIcon /></TaskIcon>
        <TaskIcon $w={38}><MailIcon /></TaskIcon>
        <TaskIcon $w={50}><EyeIcon /></TaskIcon>
        <TaskIcon $w={38}><DevIcon /></TaskIcon>
        <TaskWindow $w={155} $ml={4} $active $ls={-0.19}><IconBox $w={20}><ChromeIcon /></IconBox>SXC - Placemen...</TaskWindow>
        <TaskIcon $w={43}><NotepadIcon /></TaskIcon>
        <TaskIcon $w={43}><NppIcon /></TaskIcon>
        <TaskWindow $ml={6} $ls={-0.25}><IconBox $w={20}><WordIcon /></IconBox>Document1 - ...</TaskWindow>
        <TaskIcon $w={54}><FileIcon /></TaskIcon>
        <TaskIcon $w={32}><JupyterIcon /></TaskIcon>
        <TaskIcon $w={53}><ServerIcon /></TaskIcon>
        <TaskIcon $w={34}><RemoteIcon /></TaskIcon>
        <TaskWindow $ml={10} $ls={-0.5}><IconBox $w={20}><TeamsIcon /></IconBox>Calendar | Micr...</TaskWindow>
        <TaskIcon $w={54}><VbIcon /></TaskIcon>
        <TaskWindow $ls={-0.26}><IconBox $w={20}><FolderIcon /></IconBox>SXC_Marksheet</TaskWindow>
        <TaskWindow $ml={11} $ls={-0.17}><IconBox $w={20}><CalcIcon /></IconBox>Calculator</TaskWindow>
        <TaskWindow $ml={11} $ls={-0.45}><IconBox $w={20}><PdfFileIcon /></IconBox>Mark Sheet_Se...</TaskWindow>
        <Tray>
          <TrayItem $w={17} $mr={12}><ChevronIcon /></TrayItem>
          <TrayItem $w={20} $mr={12}><BatteryIcon /></TrayItem>
          <TrayItem $w={17} $mr={10}><WifiIcon /></TrayItem>
          <TrayItem $w={21} $mr={12}><SpeakerIcon /></TrayItem>
          <TrayItem $w={29} $mr={16} $ls={-0.2}>ENG</TrayItem>
          <TrayItem $w={35} $mr={23} $ls={-0.4}>12:46</TrayItem>
          <TrayItem $w={20}><ActionIcon /></TrayItem>
        </Tray>
        <ShowDesktop />
      </Taskbar>
    </Screen>
  );
}
